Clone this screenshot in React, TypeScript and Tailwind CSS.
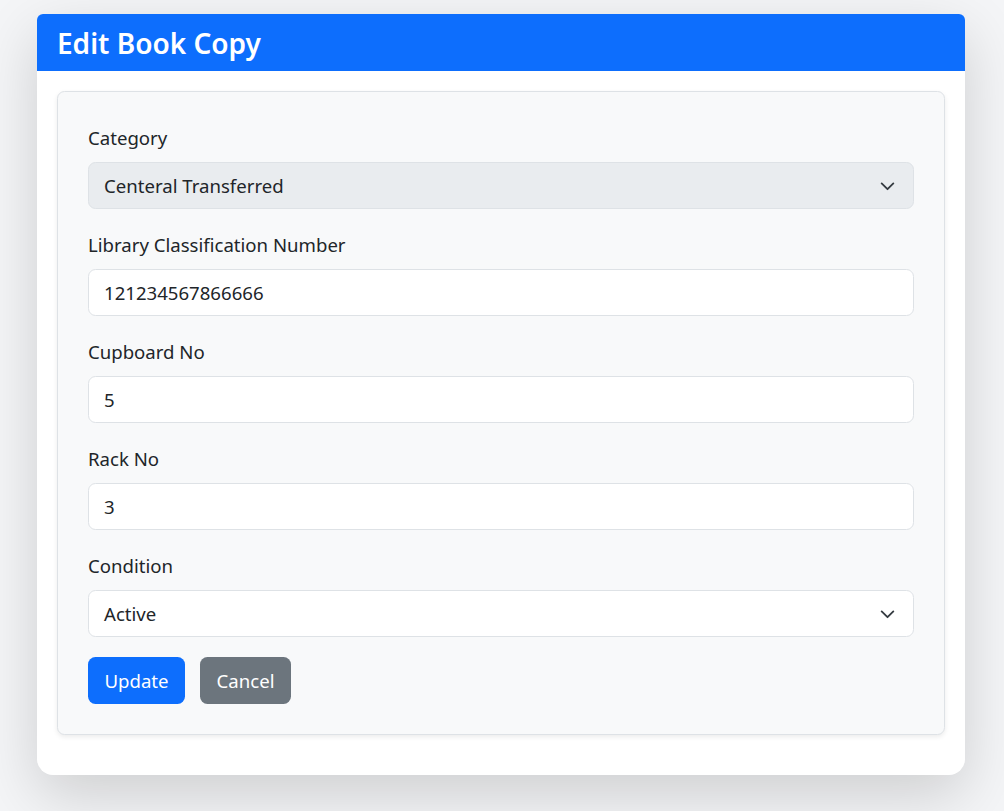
import React from "react";

const font = { fontFamily: '"Noto Sans", "Open Sans", sans-serif' };

function Chevron() {
  return (
    <svg className="absolute right-[17px] top-1/2 -translate-y-1/2" width="17" height="13" viewBox="0 0 16 12" fill="none">
      <path d="M2.5 3.5l5.5 5.5 5.5-5.5" stroke="#343a40" strokeWidth="1.7" strokeLinecap="round" strokeLinejoin="round" />
    </svg>
  );
}

function Field({ label, value, select, disabled }: { label: string; value: string; select?: boolean; disabled?: boolean }) {
  return (
    <div className="mb-[20px]">
      <div className="mb-[10px] h-[30px] leading-[32px] text-[18.6px] text-[#212529]">{label}</div>
      <div
        className={`relative h-[47px] rounded-[7.5px] border border-[#dee2e6] px-[15px] flex items-center pt-[1px] text-[18.6px] text-[#212529] ${disabled ? "bg-[#e9ecef]" : "bg-white"}`}
      >
        {value}
        {select && <Chevron />}
      </div>
    </div>
  );
}

export default function App() {
  return (
    <div className="min-h-[811px] w-full bg-[#f4f5f7] pt-[14px]" style={font}>
      <div className="mx-[37px] w-[928px] rounded-t-[6px] rounded-b-[16px] bg-white shadow-[0_20px_60px_rgba(0,0,0,0.16)]">
        <div className="h-[57px] rounded-t-[6px] bg-[#0d6efd] px-[20px] pt-[11px] text-[28px] leading-[36px] font-semibold text-white">
          Edit Book Copy
        </div>
        <div className="p-[20px]">
          <div className="mb-[20px] rounded-[7.5px] border border-[#dee2e6] bg-[#f8f9fa] p-[30px] shadow-[0_2px_5px_rgba(0,0,0,0.08)]">
            <Field label="Category" value="Centeral Transferred" select disabled />
            <Field label="Library Classification Number" value="121234567866666" />
            <Field label="Cupboard No" value="5" />
            <Field label="Rack No" value="3" />
            <Field label="Condition" value="Active" select />
            <div className="flex gap-[15px]">
              <div className="h-[47px] w-[97px] rounded-[7.5px] bg-[#0d6efd] pt-[1px] text-white text-[18.6px] flex items-center justify-center">Update</div>
              <div className="h-[47px] w-[91px] rounded-[7.5px] bg-[#6c757d] pt-[1px] text-white text-[18.6px] flex items-center justify-center">Cancel</div>
            </div>
          </div>
        </div>
      </div>
    </div>
  );
}
